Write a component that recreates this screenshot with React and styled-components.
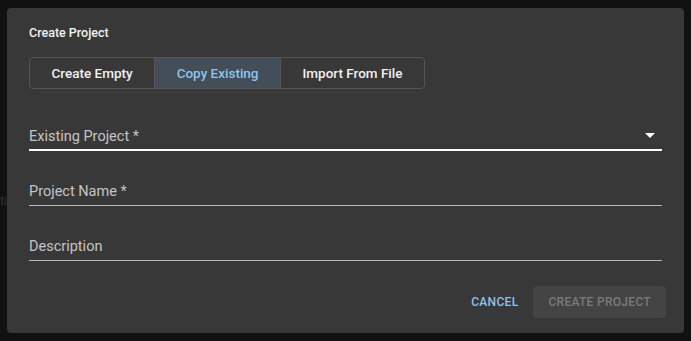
import React, { useState } from "react";
import styled, { createGlobalStyle } from "styled-components";

const GlobalStyle = createGlobalStyle`
  html, body {
    margin: 0;
    padding: 0;
    background: #111111;
    font-family: Roboto, "Liberation Sans", sans-serif;
  }
`;

const Backdrop = styled.div`
  position: relative;
  width: 691px;
  height: 341px;
  background: #111111;
  overflow: hidden;
  padding: 8px 7px;
  box-sizing: border-box;
`;

// faint page text peeking out from behind the modal
const BehindText = styled.span`
  position: absolute;
  left: 0;
  top: 193px;
  font-size: 13px;
  letter-spacing: -0.5px;
  color: #2e2e2e;
`;

const Dialog = styled.div`
  position: relative;
  height: 325px;
  background: #383838;
  border-radius: 4px;
  padding: 17px 22px 15px;
  box-sizing: border-box;
  display: flex;
  flex-direction: column;
`;

const Title = styled.h2`
  margin: 0;
  font-size: 12.5px;
  line-height: 16px;
  font-weight: 500;
  color: #f2f2f2;
`;

const TabGroup = styled.div`
  display: flex;
  align-self: flex-start;
  margin-top: 16px;
  height: 32px;
  border: 1px solid #555555;
  border-radius: 4px;
  box-sizing: border-box;
  overflow: hidden;
`;

const Tab = styled.button`
  border: none;
  border-left: ${(p) => (p.first ? "none" : "1px solid #555555")};
  background: ${(p) => (p.active ? "#444e58" : "transparent")};
  color: ${(p) => (p.active ? "#90c3ec" : "#f0f0f0")};
  font-family: Roboto, "Liberation Sans", sans-serif;
  font-size: 13.5px;
  font-weight: 500;
  padding: 0 21.5px;
  cursor: pointer;
`;

const Field = styled.div`
  display: flex;
  align-items: flex-end;
  justify-content: space-between;
  height: 48px;
  margin-top: ${(p) => p.gap}px;
  border-bottom: ${(p) => (p.focused ? "2px solid #ffffff" : "1px solid #b8b8b8")};
  padding-bottom: ${(p) => (p.focused ? 2 : 3)}px;
  box-sizing: border-box;
`;

const Label = styled.span`
  font-size: 14.5px;
  line-height: 20px;
  color: #c4c4c4;
`;

const Caret = styled.svg`
  width: 10px;
  height: 5px;
  margin: 0 7px 9px 0;
`;

const Actions = styled.div`
  display: flex;
  justify-content: flex-end;
  align-items: center;
  gap: 7px;
  margin: auto -4px 0 0;
`;

const TextButton = styled.button`
  border: none;
  background: transparent;
  color: #8fc1ea;
  font-family: Roboto, "Liberation Sans", sans-serif;
  font-size: 12px;
  font-weight: 500;
  letter-spacing: 0.3px;
  text-transform: uppercase;
  height: 32px;
  padding: 0 8px;
  cursor: pointer;
`;

const FilledButton = styled(TextButton)`
  background: #444444;
  color: #7a7a7a;
  border-radius: 4px;
  padding: 0 15px;
  cursor: default;
`;

const tabs = ["Create Empty", "Copy Existing", "Import From File"];

const App = () => {
  const [tab, setTab] = useState(1);
  return (
    <>
      <GlobalStyle />
      <Backdrop>
        <BehindText>ti</BehindText>
        <Dialog>
          <Title>Create Project</Title>
          <TabGroup>
            {tabs.map((t, i) => (
              <Tab key={t} first={i === 0} active={tab === i} onClick={() => setTab(i)}>
                {t}
              </Tab>
            ))}
          </TabGroup>
          <Field focused gap={14}>
            <Label>Existing Project *</Label>
            <Caret viewBox="0 0 10 5">
              <path d="M0 0 L10 0 L5 5 Z" fill="#ffffff" />
            </Caret>
          </Field>
          <Field gap={7}>
            <Label>Project Name *</Label>
          </Field>
          <Field gap={7}>
            <Label>Description</Label>
          </Field>
          <Actions>
            <TextButton>Cancel</TextButton>
            <FilledButton disabled>Create Project</FilledButton>
          </Actions>
        </Dialog>
      </Backdrop>
    </>
  );
};

export default App;
